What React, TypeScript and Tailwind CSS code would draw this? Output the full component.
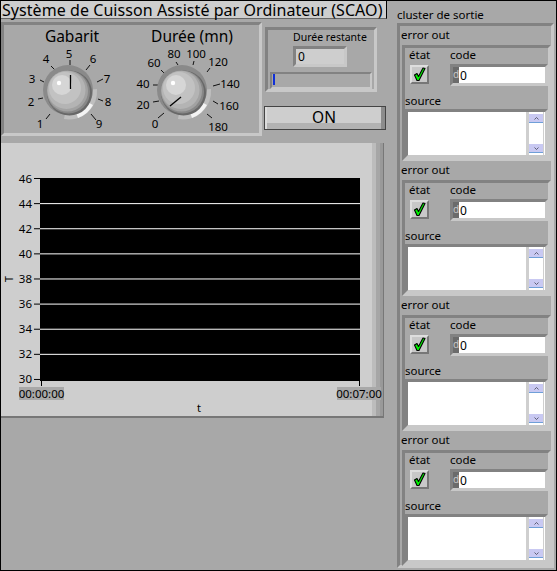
import React from 'react';

const FONT = "font-['Noto_Sans',sans-serif]";
const SUNKEN = 'border-t-[#828282] border-l-[#828282] border-r-[#c8c8c8] border-b-[#c8c8c8]';

type Tick = { label: string; lx: number; ly: number; x1: number; y1: number; x2: number; y2: number };

const GABARIT_TICKS: Tick[] = [
  { label: '1', lx: 40, ly: 123, x1: 46, y1: 119, x2: 50, y2: 114 },
  { label: '2', lx: 31, ly: 101, x1: 38, y1: 99, x2: 43, y2: 98 },
  { label: '3', lx: 32, ly: 78, x1: 40, y1: 80, x2: 44, y2: 82 },
  { label: '4', lx: 46, ly: 58, x1: 51, y1: 66, x2: 55, y2: 70 },
  { label: '5', lx: 69, ly: 53, x1: 70, y1: 60, x2: 70, y2: 65 },
  { label: '6', lx: 93, ly: 58, x1: 90, y1: 65, x2: 86, y2: 70 },
  { label: '7', lx: 107, ly: 78, x1: 103, y1: 79, x2: 97, y2: 82 },
  { label: '8', lx: 108, ly: 101, x1: 103, y1: 101, x2: 98, y2: 99 },
  { label: '9', lx: 99, ly: 123, x1: 96, y1: 120, x2: 91, y2: 114 },
];

const DUREE_TICKS: Tick[] = [
  { label: '0', lx: 155, ly: 123, x1: 158, y1: 118, x2: 164, y2: 113 },
  { label: '20', lx: 143, ly: 104, x1: 153, y1: 102, x2: 159, y2: 101 },
  { label: '40', lx: 143, ly: 83, x1: 153, y1: 85, x2: 158, y2: 85 },
  { label: '60', lx: 154, ly: 62, x1: 161, y1: 70, x2: 165, y2: 74 },
  { label: '80', lx: 174, ly: 53, x1: 176, y1: 62, x2: 178, y2: 65 },
  { label: '100', lx: 196, ly: 53, x1: 194, y1: 61, x2: 193, y2: 65 },
  { label: '120', lx: 218, ly: 61, x1: 210, y1: 68, x2: 207, y2: 72 },
  { label: '140', lx: 230, ly: 83, x1: 220, y1: 84, x2: 213, y2: 86 },
  { label: '160', lx: 229, ly: 105, x1: 218, y1: 104, x2: 213, y2: 101 },
  { label: '180', lx: 218, ly: 126, x1: 212, y1: 118, x2: 207, y2: 114 },
];

function Knob(props: {
  title: string;
  titleX: number;
  cx: number;
  cy: number;
  originX: number;
  width: number;
  ticks: Tick[];
  pointer: [number, number, number, number];
}) {
  const { title, titleX, cx, cy, originX, width, ticks, pointer } = props;
  return (
    <svg width={width} height={108} viewBox={`${originX} 25 ${width} 108`} className="block shrink-0">
      <text x={titleX} y={42} textAnchor="middle" fontSize={15.5} fill="#000" fontFamily="Noto Sans, sans-serif">
        {title}
      </text>
      {ticks.map((t) => (
        <g key={t.label}>
          <line x1={t.x1} y1={t.y1} x2={t.x2} y2={t.y2} stroke="#111" strokeWidth={1} />
          <text x={t.lx} y={t.ly + 4.5} textAnchor="middle" fontSize={11.5} fill="#000" fontFamily="Noto Sans, sans-serif">
            {t.label}
          </text>
        </g>
      ))}
      {/* light crescent, lower right */}
      <path d={`M${cx + 28} ${cy - 3} A28 28 0 0 1 ${cx - 5} ${cy + 27} L${cx} ${cy} Z`} fill="#bfbfbf" />
      <path d={`M${cx + 24} ${cy + 13} A28 28 0 0 1 ${cx + 9} ${cy + 26} L${cx} ${cy} Z`} fill="#f4f4f4" />
      <circle cx={cx - 1} cy={cy - 2} r={25} fill="#8a8a8a" />
      {/* ball, stepped shading */}
      <circle cx={cx + 0.5} cy={cy + 1} r={22.5} fill="#686868" />
      <circle cx={cx - 0.5} cy={cy} r={21.5} fill="#888" />
      <circle cx={cx - 1.5} cy={cy - 1} r={20.5} fill="#a2a2a2" />
      <circle cx={cx - 2.5} cy={cy - 2} r={19} fill="#b4b4b4" />
      <circle cx={cx - 4} cy={cy - 4} r={16} fill="#c2c2c2" />
      <circle cx={cx - 7} cy={cy - 7} r={10} fill="#d6d6d6" />
      <circle cx={cx - 10} cy={cy - 9} r={2.2} fill="#fff" />
      <line x1={pointer[0]} y1={pointer[1]} x2={pointer[2]} y2={pointer[3]} stroke="#000" strokeWidth={1.3} />
    </svg>
  );
}

function StatusCheck() {
  return (
    <div className="w-[19px] h-[19px] bg-[#c8c8c8] border-2 border-t-[#dedede] border-l-[#dedede] border-r-[#777] border-b-[#777] flex items-center justify-center">
      <svg width="13" height="15" viewBox="0 0 13 15">
        <path d="M1.5 8 L4 6.5 L5.5 9.5 L10 1 L12 1.5 L6 13.5 L4 13.5 Z" fill="#00f000" stroke="#000" strokeWidth={1.1} strokeLinejoin="round" />
      </svg>
    </div>
  );
}

function ScrollButton({ up }: { up: boolean }) {
  return (
    <div className="h-[9px] bg-[#c9c9f2] border-b border-b-[#6f9fd8] flex items-center justify-center">
      <svg width="5" height="3" viewBox="0 0 5 3">
        <path d={up ? 'M0.5 2.5 L2.5 0.5 L4.5 2.5' : 'M0.5 0.5 L2.5 2.5 L4.5 0.5'} fill="none" stroke="#445" strokeWidth={0.8} />
      </svg>
    </div>
  );
}

function ErrorCluster() {
  return (
    <div>
      <div className="h-[19px] pl-px text-[11.5px] leading-[18px] text-black">error out</div>
      <div className={`ml-[2px] w-[149px] h-[116px] border-[3px] ${SUNKEN} flex flex-col`}>
        <div className="flex h-[40px]">
          <div className="w-[45px] pl-[5px] flex flex-col">
            <div className="h-[17px] text-[11.5px] leading-[14px] -ml-px whitespace-nowrap">état</div>
            <StatusCheck />
          </div>
          <div className="flex flex-col">
            <div className="h-[16px] text-[11.5px] leading-[14px]">code</div>
            <div className={`w-[98px] h-[22px] border-[3px] ${SUNKEN} bg-white flex items-center`}>
              <div className="w-[6px] h-full bg-[#6b6b6b] text-[#c8c8c8] text-[10px] leading-[15px]">d</div>
              <div className="text-[12px] leading-[15px] pl-px text-black">0</div>
            </div>
          </div>
        </div>
        <div className="h-[15px] mt-[6px] text-[11.5px] leading-[14px]">source</div>
        <div className={`w-[143px] h-[49px] border-[3px] ${SUNKEN} bg-white flex justify-end`}>
          <div className="w-[18px] bg-white border-l-[3px] border-r border-[#cfcfcf] mr-px pt-[2px] pb-[2px] flex flex-col justify-between">
            <ScrollButton up={true} />
            <ScrollButton up={false} />
          </div>
        </div>
      </div>
    </div>
  );
}

function Chart() {
  const yLabels = [46, 44, 42, 40, 38, 36, 34, 32, 30];
  const y = (v: number) => 178.5 + (46 - v) * 12.56;
  return (
    <svg width={371} height={273} viewBox="1 143 371 273" className="block shrink-0 overflow-visible relative z-10">
      <rect x={40} y={178} width={320} height={203} fill="#000" />
      {yLabels.map((v) => (
        <g key={v}>
          <line x1={34} y1={y(v)} x2={40} y2={y(v)} stroke="#000" strokeWidth={1} />
          {v !== 46 && v !== 30 && <line x1={40} y1={y(v)} x2={360} y2={y(v)} stroke="#fff" strokeWidth={1} />}
          <text x={32} y={y(v) + 4} textAnchor="end" fontSize={11.5} fill="#000" fontFamily="Noto Sans, sans-serif">
            {v}
          </text>
        </g>
      ))}
      <text x={13} y={279} textAnchor="middle" fontSize={10.5} fill="#000" fontFamily="Noto Sans, sans-serif" transform="rotate(-90 13 279)">
        T
      </text>
      <line x1={41.5} y1={381} x2={41.5} y2={386} stroke="#000" />
      <line x1={359.5} y1={381} x2={359.5} y2={386} stroke="#000" />
      <rect x={19} y={387} width={45} height={13} fill="#a8a8a8" />
      <rect x={337} y={387} width={44} height={13} fill="#a8a8a8" />
      <text x={41.5} y={398} textAnchor="middle" fontSize={11.5} fill="#000" fontFamily="Noto Sans, sans-serif">
        00:00:00
      </text>
      <text x={359} y={398} textAnchor="middle" fontSize={11.5} fill="#000" fontFamily="Noto Sans, sans-serif">
        00:07:00
      </text>
      <text x={199} y={412} textAnchor="middle" fontSize={11} fill="#000" fontFamily="Noto Sans, sans-serif">
        t
      </text>
    </svg>
  );
}

export default function App() {
  return (
    <div className={`${FONT} w-[557px] h-[571px] bg-[#a8a8a8] border border-black text-black flex overflow-hidden`}>
      {/* Left side */}
      <div className="w-[386px] shrink-0 flex flex-col">
        <div className="h-[18px] bg-[#cecece] border-b border-b-[#666] border-r border-r-black flex items-center text-[16px] tracking-[0.06px] pl-px whitespace-nowrap">
          Système de Cuisson Assisté par Ordinateur (SCAO)
        </div>

        <div className="flex mt-[3px] h-[114px]">
          <div className={`w-[261px] border-[3px] ${SUNKEN} flex`}>
            <Knob title="Gabarit" titleX={72} cx={69} cy={92} originX={4} width={124} ticks={GABARIT_TICKS} pointer={[70.5, 75, 70.5, 89]} />
            <Knob title="Durée (mn)" titleX={192} cx={183} cy={92} originX={128} width={131} ticks={DUREE_TICKS} pointer={[170, 106, 181, 97]} />
          </div>
          <div className="flex flex-col pl-[2px] flex-1">
            <div className={`ml-px mt-[5px] w-[112px] h-[65px] border-[3px] ${SUNKEN} flex flex-col`}>
              <div className="text-[10.5px] leading-[15px] h-[16px] pl-[25px] whitespace-nowrap">Durée restante</div>
              <div className={`ml-[25px] w-[54px] h-[21px] border-[3px] ${SUNKEN} bg-[#cecece] text-[12px] leading-[15px] pl-[2px]`}>0</div>
              <div className={`ml-[2px] mt-[5px] w-[102px] h-[17px] border-2 ${SUNKEN} bg-[#a8a8a8] pl-px`}>
                <div className="w-[2px] h-[11px] bg-[#1030d8]" />
              </div>
            </div>
            <div className="mt-[14px] w-[122px] h-[24px] border border-[#444] bg-linear-to-b from-[#cecece] from-75% to-[#b2b2b2] to-75% flex items-stretch text-[15.5px] leading-none">
              <div className="w-[2px] bg-[#dcdcdc]" />
              <div className="flex-1 flex items-center justify-center">ON</div>
              <div className="w-[4px] bg-[#8c8c8c]" />
            </div>
          </div>
        </div>

        <div className="mt-[7px] w-[383px] h-[275px] bg-[#cecece] border-b-2 border-b-[#777] flex">
          <Chart />
          <div className="w-[4px] bg-[#bcbcbc]" />
          <div className="w-[4px] bg-[#a6a6a6]" />
          <div className="w-[3px] bg-[#999]" />
          <div className="w-px bg-[#777]" />
        </div>
      </div>

      {/* Right side */}
      <div className="flex-1 pl-[10px] flex flex-col">
        <div className="h-[22px] pt-[7px] text-[11.5px] leading-[14px]">cluster de sortie</div>
        <div className={`w-[157px] h-[545px] border-[3px] ${SUNKEN} flex flex-col`}>
          <ErrorCluster />
          <ErrorCluster />
          <ErrorCluster />
          <ErrorCluster />
        </div>
      </div>
    </div>
  );
}
